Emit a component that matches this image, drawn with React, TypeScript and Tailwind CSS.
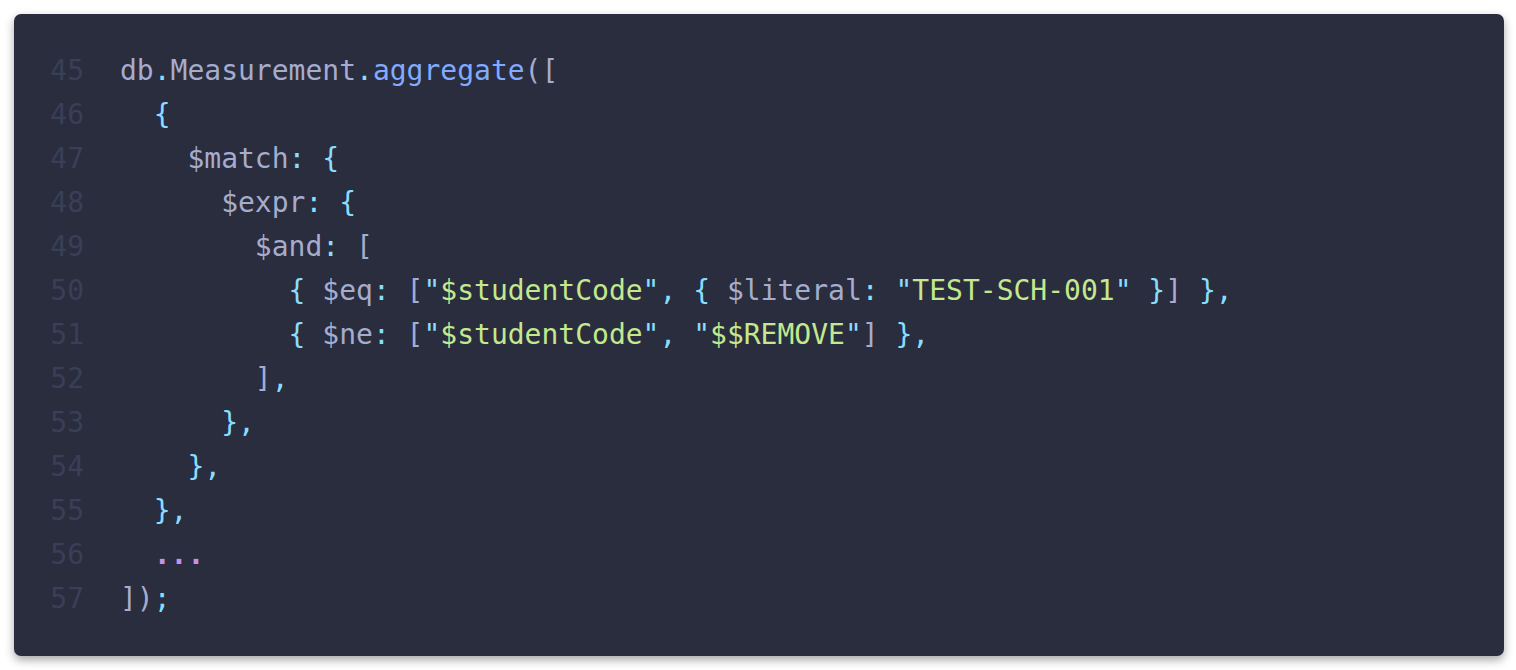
type Tok = [string, string];

const P = "text-[#a6accd]";
const C = "text-[#89ddff]";
const F = "text-[#82aaff]";
const S = "text-[#c3e88d]";
const M = "text-[#c792ea] font-bold";

const lines: Tok[][] = [
  [["db", P], [".", C], ["Measurement", P], [".", C], ["aggregate", F], ["([", P]],
  [["  ", P], ["{", C]],
  [["    $match", P], [":", C], [" ", P], ["{", C]],
  [["      $expr", P], [":", C], [" ", P], ["{", C]],
  [["        $and", P], [":", C], [" [", P]],
  [
    ["          ", P], ["{", C], [" $eq", P], [":", C], [" [", P], ['"', C], ["$studentCode", S], ['"', C], [",", C],
    [" ", P], ["{", C], [" $literal", P], [":", C], [" ", P], ['"', C], ["TEST-SCH-001", S], ['"', C], [" ", P],
    ["}", C], ["]", P], [" ", P], ["}", C], [",", C],
  ],
  [
    ["          ", P], ["{", C], [" $ne", P], [":", C], [" [", P], ['"', C], ["$studentCode", S], ['"', C], [",", C],
    [" ", P], ['"', C], ["$$REMOVE", S], ['"', C], ["]", P], [" ", P], ["}", C], [",", C],
  ],
  [["        ]", P], [",", C]],
  [["      ", P], ["}", C], [",", C]],
  [["    ", P], ["}", C], [",", C]],
  [["  ", P], ["}", C], [",", C]],
  [["  ", P], ["...", M]],
  [["])", P], [";", C]],
];

export default function App() {
  return (
    <div className="min-h-screen bg-white pt-[14px] pl-[14px]">
      <div className="w-[1490px] h-[642px] rounded-[7px] bg-[#292d3e] shadow-[0_4px_10px_rgba(0,0,0,0.35)] pt-[35px] pl-[36px] font-['DejaVu_Sans_Mono',monospace] text-[28px] leading-[44px]">
        {lines.map((toks, i) => (
          <div key={i} className="flex whitespace-pre">
            <span className="w-[34px] text-right text-[#3a3f58]">{45 + i}</span>
            <span className="ml-[36px]">
              {toks.map(([t, c], j) => (
                <span key={j} className={c}>
                  {t}
                </span>
              ))}
            </span>
          </div>
        ))}
      </div>
    </div>
  );
}
